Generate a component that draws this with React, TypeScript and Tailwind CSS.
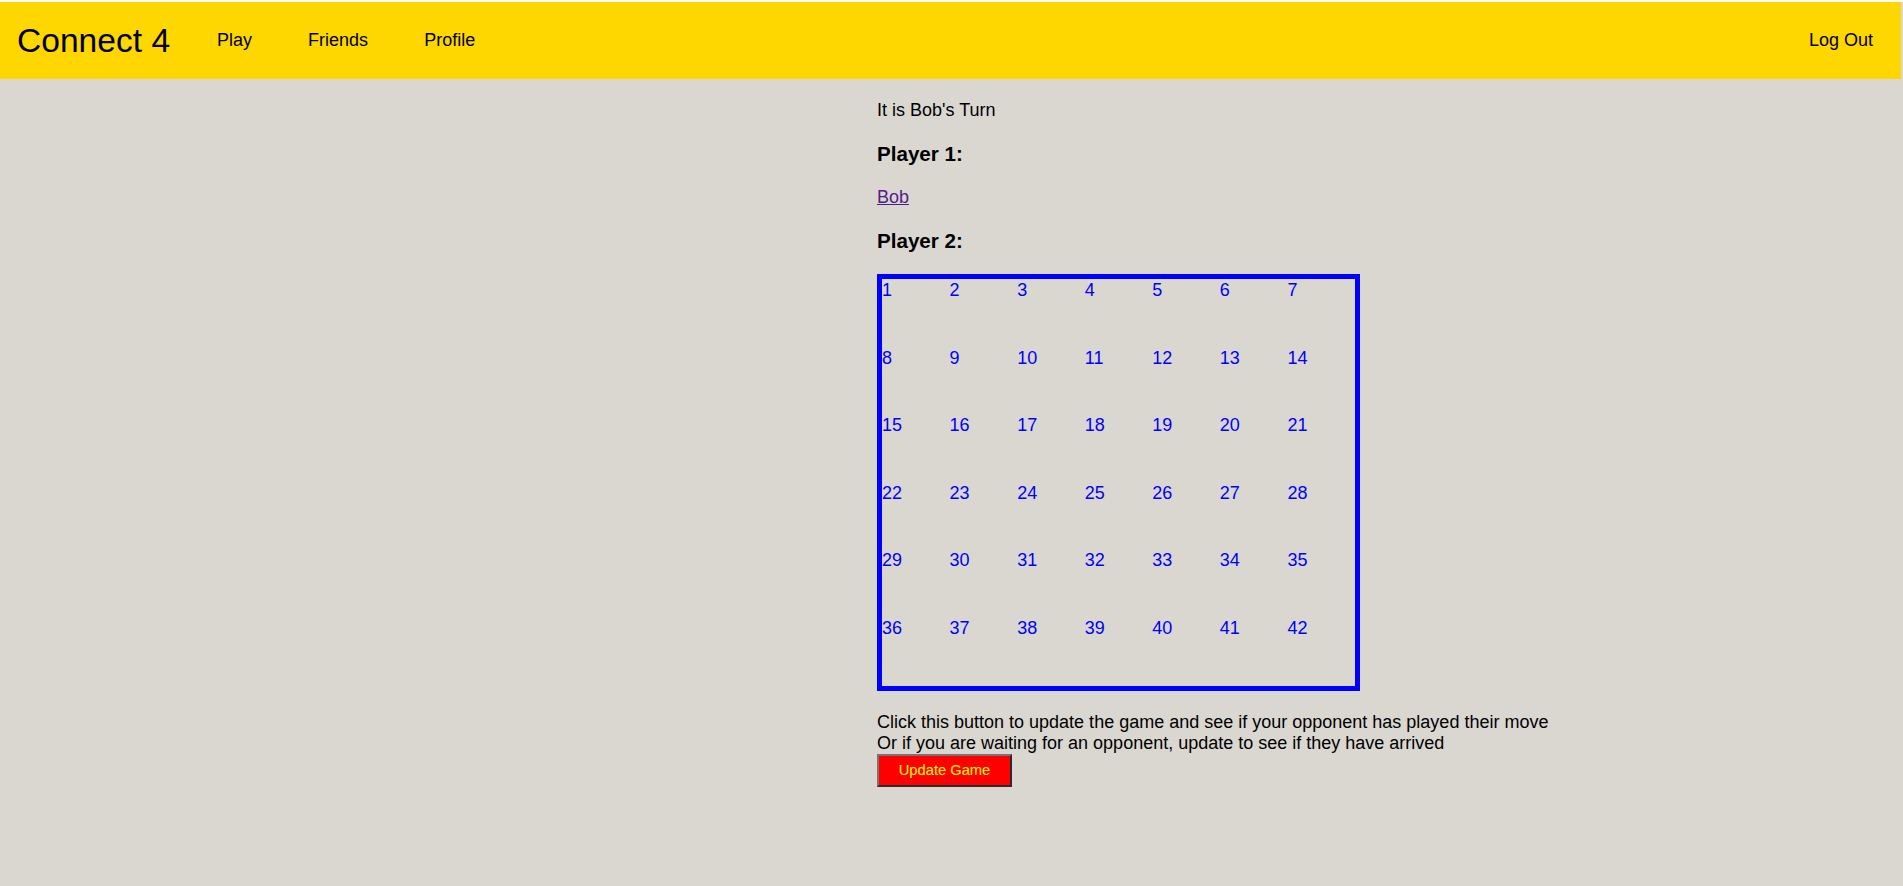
import React from 'react';

const cells = Array.from({ length: 42 }, (_, i) => i + 1);

const NavBar: React.FC = () => (
  <header className="mt-[2px] mr-[2px] h-[77px] bg-[#ffd700] flex items-center">
    <span className="ml-[17px] text-[33.6px] leading-none text-black">Connect 4</span>
    <nav className="flex items-center ml-[47px] gap-[56px] text-[18px] text-black">
      <a href="#" className="no-underline">Play</a>
      <a href="#" className="no-underline">Friends</a>
      <a href="#" className="no-underline">Profile</a>
    </nav>
    <a href="#" className="ml-auto mr-[28px] text-[18px] text-black">Log Out</a>
  </header>
);

const Board: React.FC = () => (
  <div className="w-[483px] h-[417px] border-[5px] border-[#0000ff] pt-[1px]">
    <div className="grid grid-cols-7 auto-rows-[67.5px]">
      {cells.map((n) => (
        <div key={n} className="text-[18px] leading-[20px] text-[#0000ff]">
          {n}
        </div>
      ))}
    </div>
  </div>
);

export default function App() {
  return (
    <div
      className="min-h-screen bg-[#dad7d1] text-black"
      style={{ fontFamily: '"Liberation Sans", Arial, sans-serif' }}
    >
      <NavBar />
      <main className="ml-[877px] flex flex-col items-start">
        <p className="mt-[21px] text-[18px] leading-[20px]">It is Bob's Turn</p>
        <h3 className="mt-[22px] text-[20.6px] leading-[24px] font-bold">Player 1:</h3>
        <a href="#" className="mt-[21px] text-[18px] leading-[20px] text-[#551a8b] underline">
          Bob
        </a>
        <h3 className="mt-[22px] text-[20.6px] leading-[24px] font-bold">Player 2:</h3>
        <div className="mt-[21px]">
          <Board />
        </div>
        <div className="mt-[21px] text-[18px] leading-[20.5px]">
          <p>Click this button to update the game and see if your opponent has played their move</p>
          <p>Or if you are waiting for an opponent, update to see if they have arrived</p>
        </div>
        <button
          type="button"
          className="mt-[1px] w-[135px] h-[33px] bg-[#ff0000] text-[#ffff00] text-[14.7px] border-2 border-t-[#767676] border-l-[#767676] border-b-[#2b2b2b] border-r-[#2b2b2b]"
        >
          Update Game
        </button>
      </main>
    </div>
  );
}
